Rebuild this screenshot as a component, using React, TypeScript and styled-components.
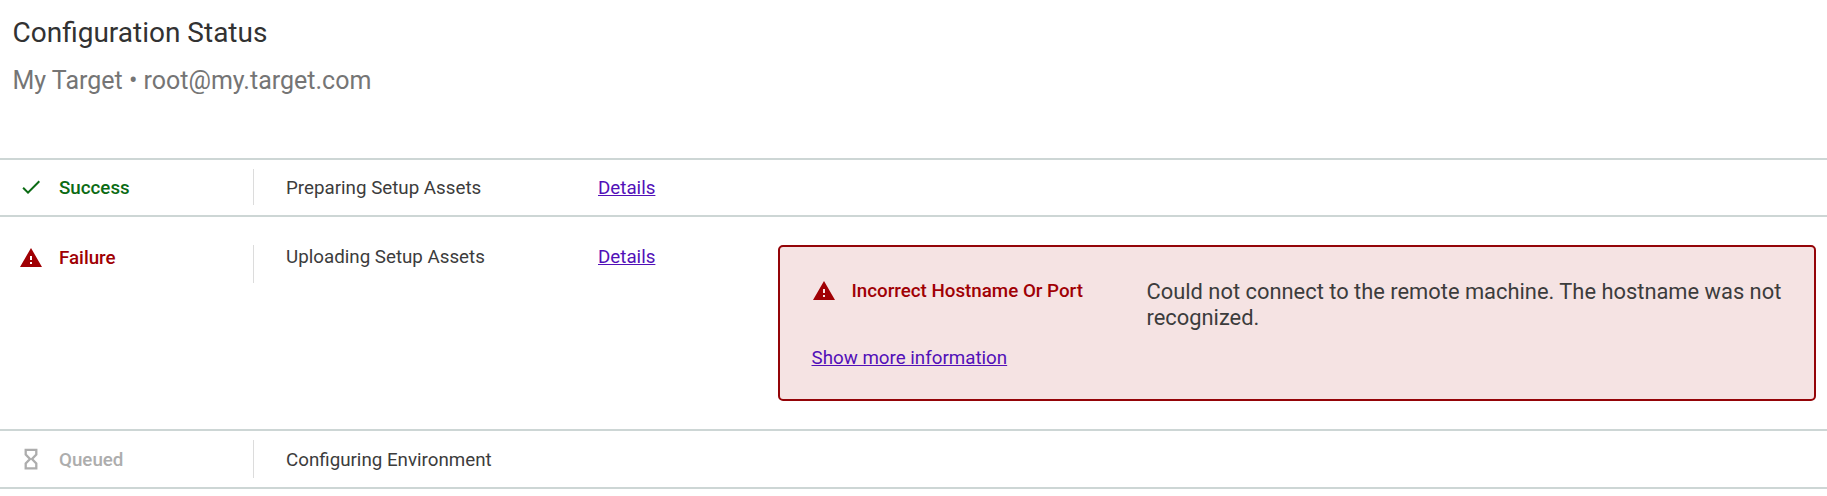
import React from "react";
import styled, { createGlobalStyle, css } from "styled-components";
import { MdCheck, MdWarning } from "react-icons/md";

type Tone = "success" | "failure" | "queued";

const tones: Record<Tone, string> = {
  success: "#0b6b14",
  failure: "#a00004",
  queued: "#adadad",
};

const GlobalStyle = createGlobalStyle`
  *, *::before, *::after { box-sizing: border-box; }
  body {
    margin: 0;
    background: #fff;
    color: #3c3c3c;
    font-family: Roboto, "Liberation Sans", sans-serif;
    font-size: 18.75px;
    line-height: 24px;
  }
`;

const Page = styled.main`
  min-height: 496px;
`;

const Header = styled.header`
  height: 158px;
  padding: 14px 12.5px 0;
`;

const Title = styled.h1`
  margin: 0;
  font-size: 28px;
  line-height: 37px;
  font-weight: 400;
  color: #323232;
`;

const Subtitle = styled.p`
  margin: 12px 0 0;
  font-size: 25px;
  line-height: 35px;
  color: #757575;
`;

const StepList = styled.section`
  border-top: 2px solid #cdd6d5;
`;

const Step = styled.div<{ $pad: string }>`
  display: flex;
  align-items: flex-start;
  padding: ${(p) => p.$pad};
  border-bottom: 2px solid #cdd6d5;
`;

const StatusCell = styled.div<{ $height: number; $inset: number }>`
  width: 254px;
  height: ${(p) => p.$height}px;
  padding: ${(p) => p.$inset}px 0 0 19px;
  border-right: 1px solid #dcdcdc;
`;

const Status = styled.div<{ $tone: Tone }>`
  display: flex;
  align-items: flex-start;
  gap: 16px;
  font-weight: 500;
  white-space: nowrap;
  color: ${(p) => tones[p.$tone]};
`;

const StatusLabel = styled.span<{ $drop?: number }>`
  padding-top: ${(p) => p.$drop ?? 0}px;
`;

const cell = css<{ $inset: number }>`
  padding-top: ${(p) => p.$inset}px;
  white-space: nowrap;
`;

const StepName = styled.div<{ $inset: number }>`
  ${cell}
  width: 312px;
  margin-left: 32px;
`;

const DetailsCell = styled.div<{ $inset: number }>`
  ${cell}
  width: 180px;
`;

const Link = styled.a`
  color: #5210b8;
  text-decoration: underline;
  cursor: pointer;
`;

const ErrorCard = styled.div`
  flex: 1;
  height: 156px;
  padding: 32px 28px 0 31.5px;
  border: 2px solid #940408;
  border-radius: 5px;
  background: #f5e3e3;
`;

const ErrorSummary = styled.div`
  display: flex;
  align-items: flex-start;
  height: 67px;
`;

const ErrorTitle = styled.div`
  width: 335px;
`;

const ErrorMessage = styled.p`
  flex: 1;
  margin: 0;
  font-size: 21.88px;
  line-height: 26px;
`;

const HourglassIcon = () => (
  <svg width="24" height="24" viewBox="0 0 24 24" fill="none" stroke="currentColor" strokeWidth="2.3">
    <path d="M6.7 2.9h10.6v4.7L13 12l4.3 4.4v4.9H6.7v-4.9L11 12 6.7 7.6z" />
  </svg>
);

export default function App() {
  return (
    <>
      <GlobalStyle />
      <Page>
        <Header>
          <Title>Configuration Status</Title>
          <Subtitle>My Target • root@my.target.com</Subtitle>
        </Header>
        <StepList>
          <Step $pad="9px 0 10px">
            <StatusCell $height={36} $inset={6}>
              <Status $tone="success">
                <MdCheck size={24} />
                <StatusLabel $drop={1}>Success</StatusLabel>
              </Status>
            </StatusCell>
            <StepName $inset={7}>Preparing Setup Assets</StepName>
            <DetailsCell $inset={7}><Link>Details</Link></DetailsCell>
          </Step>
          <Step $pad="28px 11px 28px 0">
            <StatusCell $height={38} $inset={1}>
              <Status $tone="failure">
                <MdWarning size={24} />
                <StatusLabel>Failure</StatusLabel>
              </Status>
            </StatusCell>
            <StepName $inset={0}>Uploading Setup Assets</StepName>
            <DetailsCell $inset={0}><Link>Details</Link></DetailsCell>
            <ErrorCard>
              <ErrorSummary>
                <ErrorTitle>
                  <Status $tone="failure">
                    <MdWarning size={24} />
                    <StatusLabel>Incorrect Hostname Or Port</StatusLabel>
                  </Status>
                </ErrorTitle>
                <ErrorMessage>
                  Could not connect to the remote machine. The hostname was not recognized.
                </ErrorMessage>
              </ErrorSummary>
              <Link>Show more information</Link>
            </ErrorCard>
          </Step>
          <Step $pad="9px 0 9px">
            <StatusCell $height={38} $inset={7}>
              <Status $tone="queued">
                <HourglassIcon />
                <StatusLabel $drop={1}>Queued</StatusLabel>
              </Status>
            </StatusCell>
            <StepName $inset={8}>Configuring Environment</StepName>
          </Step>
        </StepList>
      </Page>
    </>
  );
}
